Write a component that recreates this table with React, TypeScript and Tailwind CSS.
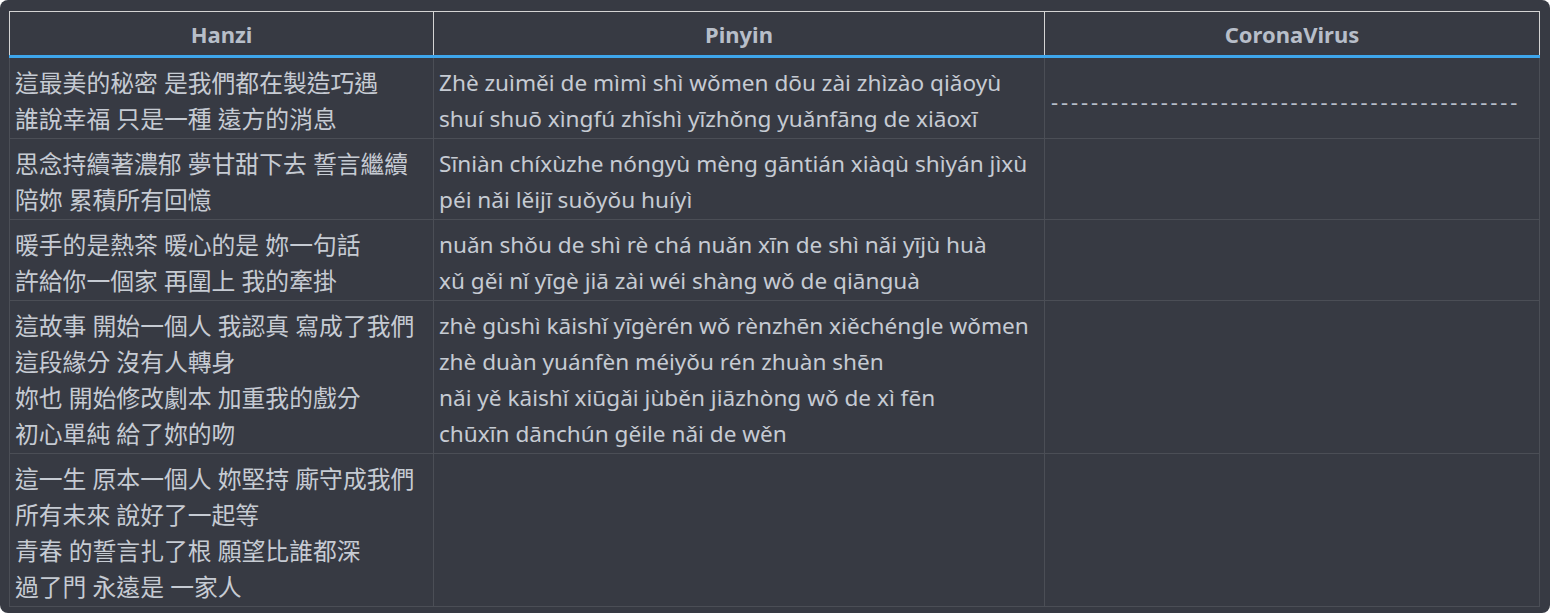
const rows: { hanzi: string[]; pinyin: string[]; virus?: string }[] = [
  {
    hanzi: ['這最美的秘密 是我們都在製造巧遇', '誰說幸福 只是一種 遠方的消息'],
    pinyin: ['Zhè zuìměi de mìmì shì wǒmen dōu zài zhìzào qiǎoyù', 'shuí shuō xìngfú zhǐshì yīzhǒng yuǎnfāng de xiāoxī'],
    virus: '-'.repeat(47),
  },
  {
    hanzi: ['思念持續著濃郁 夢甘甜下去 誓言繼續', '陪妳 累積所有回憶'],
    pinyin: ['Sīniàn chíxùzhe nóngyù mèng gāntián xiàqù shìyán jìxù', 'péi nǎi lěijī suǒyǒu huíyì'],
  },
  {
    hanzi: ['暖手的是熱茶 暖心的是 妳一句話', '許給你一個家 再圍上 我的牽掛'],
    pinyin: ['nuǎn shǒu de shì rè chá nuǎn xīn de shì nǎi yījù huà', 'xǔ gěi nǐ yīgè jiā zài wéi shàng wǒ de qiānguà'],
  },
  {
    hanzi: ['這故事 開始一個人 我認真 寫成了我們', '這段緣分 沒有人轉身', '妳也 開始修改劇本 加重我的戲分', '初心單純 給了妳的吻'],
    pinyin: [
      'zhè gùshì kāishǐ yīgèrén wǒ rènzhēn xiěchéngle wǒmen',
      'zhè duàn yuánfèn méiyǒu rén zhuàn shēn',
      'nǎi yě kāishǐ xiūgǎi jùběn jiāzhòng wǒ de xì fēn',
      'chūxīn dānchún gěile nǎi de wěn',
    ],
  },
  {
    hanzi: ['這一生 原本一個人 妳堅持 廝守成我們', '所有未來 說好了一起等', '青春 的誓言扎了根 願望比誰都深', '過了門 永遠是 一家人'],
    pinyin: [],
  },
];

export default function App() {
  return (
    <div className="bg-white">
      <div className="h-[613px] rounded-lg bg-[#373a43] pt-[11px] pl-[9px] font-['Noto_Sans','Noto_Sans_CJK_TC',sans-serif]">
        <table className="w-[1530px] table-fixed border-collapse">
          <colgroup>
            <col className="w-[424px]" />
            <col className="w-[611px]" />
            <col className="w-[495px]" />
          </colgroup>
          <thead>
            <tr className="h-[45px] text-[22px] font-bold text-[#b7bec9]">
              <th className="border border-[#d4d4d4] border-b-[3px] border-b-[#3ea6ec] pt-[2px]">Hanzi</th>
              <th className="border border-[#d4d4d4] border-b-[3px] border-b-[#3ea6ec] pt-[2px]">Pinyin</th>
              <th className="border border-[#d4d4d4] border-b-[3px] border-b-[#3ea6ec] pt-[2px]">CoronaVirus</th>
            </tr>
          </thead>
          <tbody className="leading-[36px] text-[#c6cbd3]">
            {rows.map((r, i) => (
              <tr key={i}>
                <td className="border border-[#4b4e56] px-[5px] pt-[7px] pb-[1px] align-top whitespace-nowrap text-[23.8px]">
                  {r.hanzi.map((l, j) => (
                    <div key={j}>{l}</div>
                  ))}
                </td>
                <td className="border border-[#4b4e56] px-[5px] pt-[7px] pb-[1px] align-top whitespace-nowrap text-[22.6px]">
                  {r.pinyin.map((l, j) => (
                    <div key={j}>{l}</div>
                  ))}
                </td>
                <td className="border border-[#4b4e56] px-[6px] pt-[7px] pb-[1px] align-middle text-[22px]">
                  {r.virus && <div className="tracking-[2.9px] text-[#b7bec9]">{r.virus}</div>}
                </td>
              </tr>
            ))}
          </tbody>
        </table>
      </div>
    </div>
  );
}
